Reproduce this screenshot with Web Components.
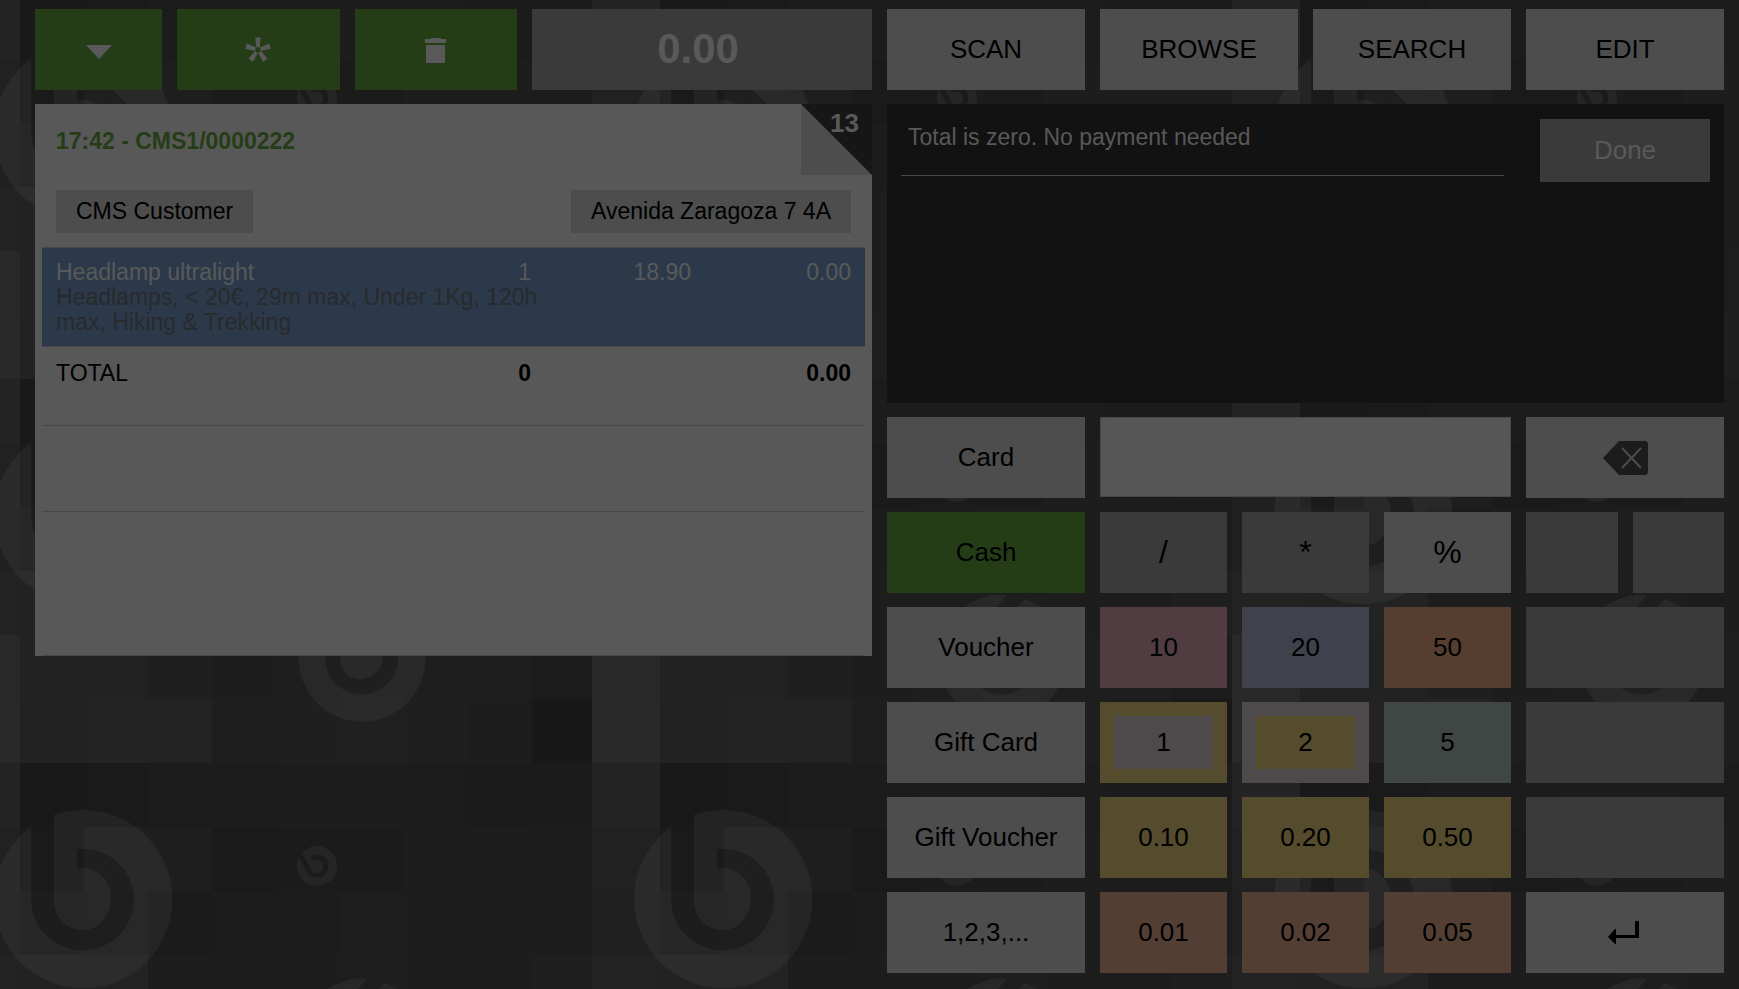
<!DOCTYPE html>
<html lang="en">
<head>
<meta charset="utf-8">
<title>Point of sale</title>
<style>
  body { margin: 0; background: #1c1c1c; color: #000; font: 26px/30px "Liberation Sans", Arial, sans-serif; }
</style>
</head>
<body>
<pos-app></pos-app>

<template id="pos-app">
  <style>
    :host { display: block; position: relative; min-height: 100vh; box-sizing: border-box; padding: 9px 15px 16px 35px; overflow: hidden; }
    main { position: relative; display: grid; grid-template-columns: minmax(0, 1fr) minmax(0, 1fr); gap: 15px; align-items: start; }
    section { display: grid; gap: 14px; }
  </style>
  <pos-backdrop></pos-backdrop>
  <main>
    <section aria-label="Receipt">
      <pos-toolbar></pos-toolbar>
      <pos-ticket number="13">
        <span slot="title">17:42 - CMS1/0000222</span>
        <span slot="customer">CMS Customer</span>
        <span slot="address">Avenida Zaragoza 7 4A</span>
      </pos-ticket>
    </section>
    <section aria-label="Payment">
      <pos-tabs></pos-tabs>
      <pos-status>Total is zero. No payment needed</pos-status>
      <pos-keypad></pos-keypad>
    </section>
  </main>
</template>

<template id="pos-backdrop">
  <style>
    :host { display: block; position: absolute; inset: 0; }
    svg { display: block; width: 100%; height: 100%; }
  </style>
  <svg aria-hidden="true">
    <defs>
      <path id="mark" d="M-29-84A89 89 0 1 1-52-72V0A51 51 0 0 0 51 0A51 50 0 0 0 0-50H-6V-31H0A28 31 0 0 1 28 0A28 31 0 0 1 0 31A29 29 0 0 1-29 2Z"/>
      <pattern id="tile" x="20" y="-5" width="640" height="384" patternUnits="userSpaceOnUse">
        <g id="cells" shape-rendering="crispEdges"></g>
        <g fill="#fff" fill-opacity=".045">
          <use href="#mark" transform="translate(63 136)"/>
          <use href="#mark" transform="translate(703 136)"/>
          <use href="#mark" transform="translate(342 279) rotate(40) scale(.713)"/>
          <use href="#mark" transform="translate(297 103) rotate(-30) scale(.225)"/>
        </g>
      </pattern>
    </defs>
    <rect width="100%" height="100%" fill="url(#tile)"/>
  </svg>
</template>

<template id="pos-button">
  <style>
    :host { display: block; height: 81px; }
    button { display: flex; align-items: center; justify-content: center; box-sizing: border-box; width: 100%; height: 100%; margin: 0; padding: 0 0 2px;
      border: 0 solid; border-radius: 0; background: #4d4d4d; color: #000; font: inherit; white-space: nowrap; cursor: pointer; }
    button:disabled { cursor: default; }
    ::slotted(svg) { margin-top: 2px; }
    :host([tone="green"]) button { background: #253d16; }
    :host([tone="off"]) button { background: #3a3a3a; }
    :host([tone="rose"]) button { background: #513d41; }
    :host([tone="blue"]) button { background: #3f414d; }
    :host([tone="orange"]) button { background: #553e30; }
    :host([tone="teal"]) button { background: #3f4644; }
    :host([tone="gold"]) button { background: #544c2c; }
    :host([tone="copper"]) button { background: #523e33; }
    :host([tone="one"]) button { border: 14px solid #544c2c; background: #4e4a4b; }
    :host([tone="two"]) button { border: 14px solid #4e4a4b; background: #544c2c; }
    :host([sign]) button { font-size: 32px; }
  </style>
  <button type="button"><slot></slot></button>
</template>

<template id="pos-toolbar">
  <style>
    :host { display: grid; grid-template-columns: repeat(24, minmax(0, 1fr)); column-gap: 15px; }
    pos-button { grid-column: span 5; }
    pos-button:first-of-type { grid-column: span 4; }
    svg { display: block; fill: #595959; }
    output { grid-column: span 10; display: flex; align-items: center; justify-content: center; padding: 0 8px 2px 0; background: #3a3a3a; color: #595959; font-size: 42px; font-weight: bold; }
  </style>
  <pos-button tone="green" label="More"><svg width="28" height="28"><path d="M1 9H27L14 23Z"/></svg></pos-button>
  <pos-button tone="green" label="Menu"><svg width="28" height="28" viewBox="-14 -14 28 28"><path id="arm" d="M-2.700-12.500H2.700L1.700-2.300A3 3 0 0 0-1.700-2.300Z"/><use href="#arm" transform="rotate(72)"/><use href="#arm" transform="rotate(144)"/><use href="#arm" transform="rotate(216)"/><use href="#arm" transform="rotate(288)"/></svg></pos-button>
  <pos-button tone="green" label="Delete receipt"><svg width="28" height="28"><path d="M3 3H9V2H19V3H24V7H3ZM4 9H23V27H4Z"/></svg></pos-button>
  <output>0.00</output>
</template>

<template id="pos-tabs">
  <style>
    :host { display: grid; grid-template-columns: repeat(4, minmax(0, 1fr)); gap: 15px; }
  </style>
  <pos-button>SCAN</pos-button>
  <pos-button>BROWSE</pos-button>
  <pos-button>SEARCH</pos-button>
  <pos-button>EDIT</pos-button>
</template>

<template id="pos-ticket">
  <style>
    :host { display: block; position: relative; background: #585858; padding: 25px 7px 0; font-size: 23px; line-height: 25px; }
    header { padding: 0 14px; }
    h1 { margin: 0; font: inherit; font-weight: bold; color: #253d16; }
    .who { display: flex; justify-content: space-between; padding: 36px 0 14px; }
    .who button { height: 43px; margin: 0; padding: 0 20px; border: 0; background: #4d4d4d; color: #000; font: inherit; }
    .corner { position: absolute; top: 0; right: 0; width: 71px; height: 71px; background: #4d4d4d; }
    .corner div { box-sizing: border-box; height: 100%; padding: 7px 13px; clip-path: polygon(0 0, 100% 0, 100% 100%); background: #161616;
      color: #595959; font-size: 26px; font-weight: bold; text-align: right; }
    table { width: 100%; border-collapse: collapse; table-layout: fixed; }
    .c-qty { width: 80px; }
    .c-sum { width: 160px; }
    td, th { padding: 12px 14px 0; text-align: right; font-weight: normal; vertical-align: top; }
    th { text-align: left; }
    .line { background: #2c394b; color: #595959; }
    .line tr:first-child > * { border-top: 1px solid #484848; }
    .note { padding: 0 14px 11px; text-align: left; color: #282a2c; border-bottom: 1px solid #484848; }
    .note p { margin: 0; max-width: 500px; }
    tfoot > tr > * { padding-top: 14px; padding-bottom: 39px; border-bottom: 1px solid #484848; }
    tfoot td { font-weight: bold; }
    .blank { height: 85px; border-bottom: 1px solid #484848; }
    .blank.last { height: 143px; }
  </style>
  <header>
    <h1><slot name="title"></slot></h1>
    <div class="who">
      <button type="button"><slot name="customer"></slot></button>
      <button type="button"><slot name="address"></slot></button>
    </div>
  </header>
  <div class="corner"><div></div></div>
  <table>
    <colgroup><col><col class="c-qty"><col class="c-sum"><col class="c-sum"></colgroup>
    <tbody class="line">
      <tr><th scope="row">Headlamp ultralight</th><td>1</td><td>18.90</td><td>0.00</td></tr>
      <tr><td class="note" colspan="4"><p>Headlamps, &lt; 20€, 29m max, Under 1Kg, 120h max, Hiking &amp; Trekking</p></td></tr>
    </tbody>
    <tfoot>
      <tr><th scope="row">TOTAL</th><td>0</td><td></td><td>0.00</td></tr>
    </tfoot>
  </table>
  <div class="blank"></div>
  <div class="blank last"></div>
</template>

<template id="pos-status">
  <style>
    :host { display: flex; align-items: flex-start; gap: 36px; box-sizing: border-box; min-height: 299px; padding: 15px 14px; background: #121212; color: #595959; }
    p { flex: 1; margin: 0; padding: 6px 7px 25px; border-bottom: 1px solid #484848; font-size: 23px; line-height: 25px; }
    pos-button { width: 170px; height: 63px; }
    span { color: #595959; }
  </style>
  <p><slot></slot></p>
  <pos-button tone="off"><span>Done</span></pos-button>
</template>

<template id="pos-keypad">
  <style>
    :host { display: grid; grid-template-columns: repeat(24, minmax(0, 1fr)); gap: 14px 15px; }
    .wide { grid-column: span 6; }
    .key { grid-column: span 4; }
    .half { grid-column: span 3; }
    input { grid-column: span 12; box-sizing: border-box; width: 100%; height: 80px; padding: 0 14px; border: 1px solid #484848; border-radius: 0; background: #565656; color: #000; font: inherit; }
    svg { display: block; }
  </style>
  <pos-button class="wide">Card</pos-button>
  <input type="text" aria-label="Amount">
  <pos-button class="wide" label="Backspace"><svg width="46" height="34"><path fill="#1c1c1c" d="M17 0H44L46 2V32L44 34H17L1 17Z"/><path d="M20 7L39 27M39 7L20 27" fill="none" stroke="#4d4d4d" stroke-width="2"/></svg></pos-button>

  <pos-button class="wide" tone="green">Cash</pos-button>
  <pos-button class="key" tone="off" sign>/</pos-button>
  <pos-button class="key" tone="off" sign>*</pos-button>
  <pos-button class="key" sign>%</pos-button>
  <pos-button class="half" tone="off" label="Decrease" disabled></pos-button>
  <pos-button class="half" tone="off" label="Increase" disabled></pos-button>

  <pos-button class="wide">Voucher</pos-button>
  <pos-button class="key" tone="rose">10</pos-button>
  <pos-button class="key" tone="blue">20</pos-button>
  <pos-button class="key" tone="orange">50</pos-button>
  <pos-button class="wide" tone="off" label="Quantity" disabled></pos-button>

  <pos-button class="wide">Gift Card</pos-button>
  <pos-button class="key" tone="one">1</pos-button>
  <pos-button class="key" tone="two">2</pos-button>
  <pos-button class="key" tone="teal">5</pos-button>
  <pos-button class="wide" tone="off" label="Price" disabled></pos-button>

  <pos-button class="wide">Gift Voucher</pos-button>
  <pos-button class="key" tone="gold">0.10</pos-button>
  <pos-button class="key" tone="gold">0.20</pos-button>
  <pos-button class="key" tone="gold">0.50</pos-button>
  <pos-button class="wide" tone="off" label="Discount" disabled></pos-button>

  <pos-button class="wide">1,2,3,...</pos-button>
  <pos-button class="key" tone="copper">0.01</pos-button>
  <pos-button class="key" tone="copper">0.02</pos-button>
  <pos-button class="key" tone="copper">0.05</pos-button>
  <pos-button class="wide" label="Enter"><svg width="34" height="24"><path d="M27 0H31V17H8V23H7L0 16L7 8H8V14H27Z"/></svg></pos-button>
</template>

<script>
  class TemplateElement extends HTMLElement {
    constructor() {
      super();
      this.attachShadow({ mode: "open" })
        .append(document.getElementById(this.localName).content.cloneNode(true));
    }
  }

  // Grey level of every backdrop cell, row by row.
  const CELL_X = [0, 64, 128, 192, 256, 320, 384, 448, 512, 572, 640];
  const CELLS = [
    "19 1a 1c 1c 1d 1d 1c 1b 1b 24",
    "1a 1f 1e 1a 1b 1b 1d 1d 1c 21",
    "1d 1e 1b 1c 1c 1e 1d 1d 1c 20",
    "22 23 1d 1d 1d 1e 1d 1d 1f 23",
    "22 22 1f 1d 1e 1f 1e 1e 1c 28",
    "22 23 23 1e 1f 20 1f 1d 18 29"
  ];

  customElements.define("pos-backdrop", class extends TemplateElement {
    connectedCallback() {
      this.shadowRoot.getElementById("cells").innerHTML = CELLS.map((row, r) =>
        row.split(" ").map((g, c) =>
          `<rect x="${CELL_X[c]}" y="${r * 64}" width="${CELL_X[c + 1] - CELL_X[c]}" height="64" fill="#${g + g + g}"/>`
        ).join("")).join("");
    }
  });

  customElements.define("pos-button", class extends TemplateElement {
    connectedCallback() {
      const button = this.shadowRoot.querySelector("button");
      if (this.hasAttribute("label")) button.setAttribute("aria-label", this.getAttribute("label"));
      button.disabled = this.hasAttribute("disabled");
    }
  });

  customElements.define("pos-ticket", class extends TemplateElement {
    connectedCallback() {
      this.shadowRoot.querySelector(".corner div").textContent = this.getAttribute("number");
    }
  });

  for (const name of ["pos-toolbar", "pos-tabs", "pos-status", "pos-keypad", "pos-app"])
    customElements.define(name, class extends TemplateElement {});
</script>
</body>
</html>
